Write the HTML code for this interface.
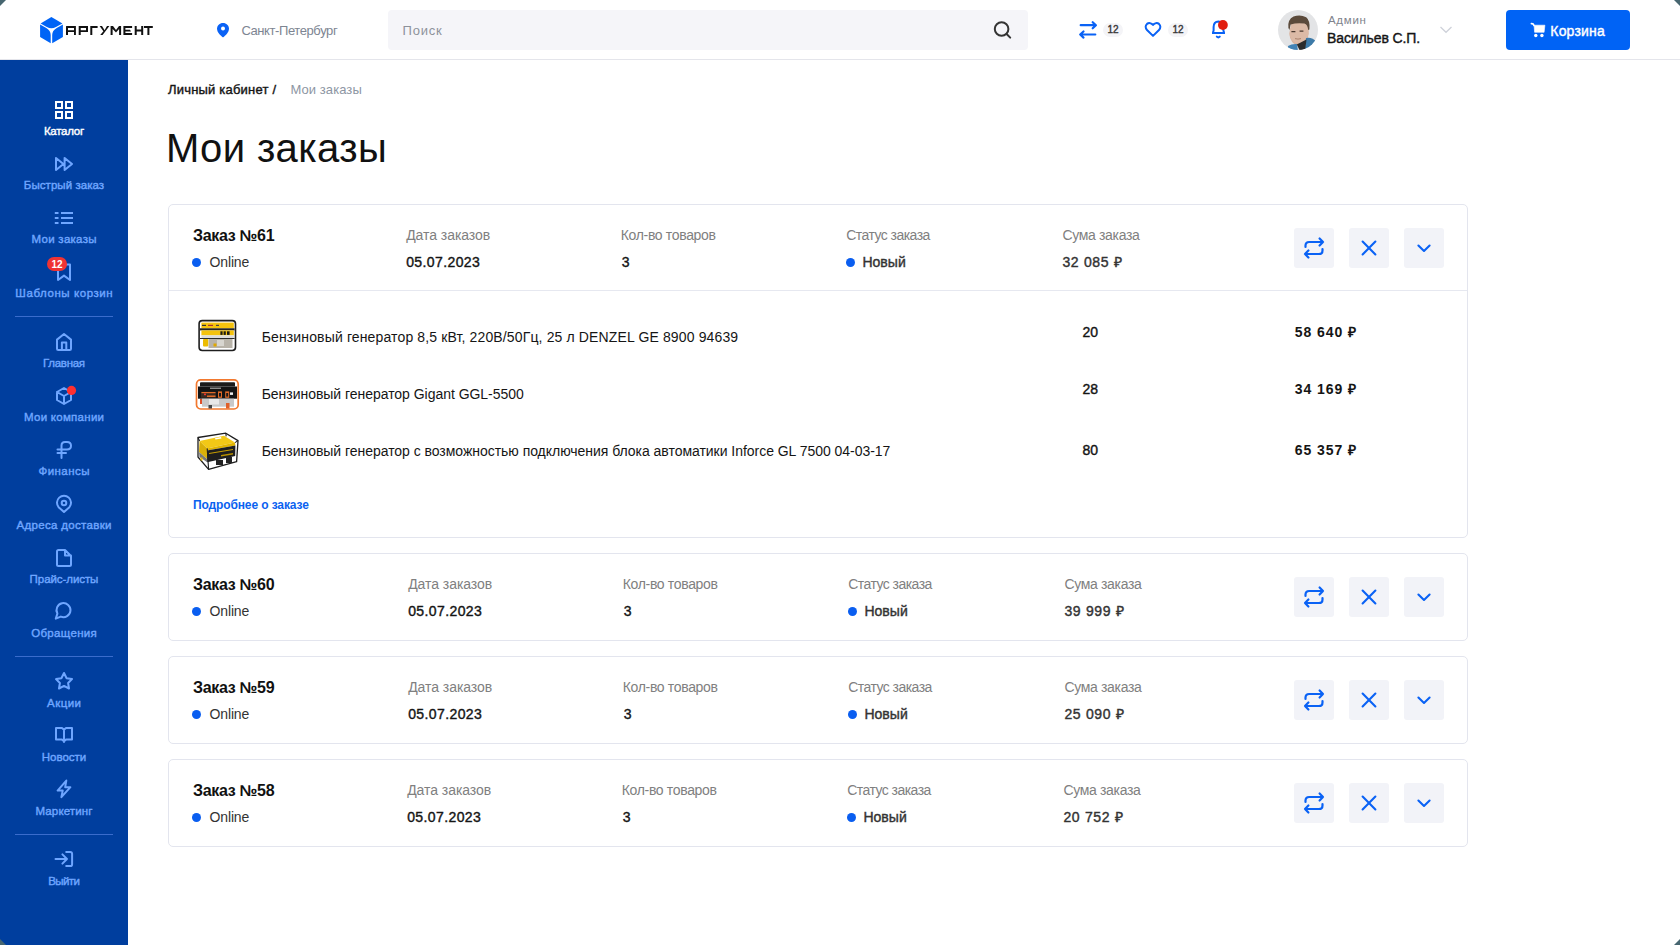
<!DOCTYPE html>
<html lang="ru">
<head>
<meta charset="utf-8">
<title>Мои заказы</title>
<style>
*{box-sizing:border-box;margin:0;padding:0}
html,body{width:1680px;height:945px;overflow:hidden;background:#fff;font-family:"Liberation Sans",sans-serif;color:#151515}
.abs{position:absolute}
.t{position:absolute;white-space:nowrap}
svg.abs{overflow:visible}
</style>
</head>
<body>
<div class="abs" style="left:0px;top:0px;width:1680px;height:59px;background:#fff;"></div>
<div class="abs" style="left:0px;top:59px;width:1680px;height:1px;background:#e4e5eb;"></div>
<svg class="abs" style="left:36px;top:14px;" width="30" height="32" viewBox="0 0 30 32"><g fill="#0064f6">
<path d="M4.6 9.4 L15.4 3 L26.4 9.4 L20 13 Q15.4 15.4 10.8 13 Z"/>
<path d="M4.1 10.4 L10.3 14 Q14.7 16.5 14.7 21 V29.2 L4.1 23 Z"/>
<path d="M26.9 10.4 L20.7 14 Q16.2 16.5 16.2 21 V29.2 L26.9 23 Z"/>
</g></svg>
<svg class="abs" style="left:64px;top:24px;" width="92" height="14" viewBox="0 0 92 14"><g fill="#111">
<path d="M2 2.5 Q2 2 2.5 2 H11.9 V11 H10 V8 H4 V11 H2 Z M4 4 V6.2 H10 V4 Z"/>
<path d="M14.7 2 H24 V8 H16.7 V11 H14.7 Z M16.7 4 V6.2 H22 V4 Z"/>
<path d="M26.3 2 H33.6 V4 H28.3 V11 H26.3 Z"/>
<path d="M35.6 2 H38 L40.6 6.2 L43 2 H45.4 L38.6 11 H36.2 L39.4 7.3 Z"/>
<path d="M46.6 2 H49 L52 6 L55 2 H57.1 V11 H55.1 V5 L52 8.6 L48.6 5 V11 H46.6 Z"/>
<path d="M59.4 2 H68.1 V4 H61.4 V5.8 H66 L67 7.4 H61.4 V9 H68.1 V11 H59.4 Z"/>
<path d="M70.7 2 H72.7 V5.6 H77.2 V2 H79.2 V11 H77.2 V7.4 H72.7 V11 H70.7 Z"/>
<path d="M80 2 H88.8 V4 H85.4 V11 H83.4 V4 H80 Z"/>
</g></svg>
<svg class="abs" style="left:215px;top:22px;" width="16" height="16" viewBox="0 0 16 16"><path d="M8 1 C4.6 1 2 3.6 2 6.8 C2 10.4 6.2 14.2 7.4 15 Q8 15.4 8.6 15 C9.8 14.2 14 10.4 14 6.8 C14 3.6 11.4 1 8 1 Z" fill="#0a62f5"/><circle cx="8" cy="6.6" r="2" fill="#fff"/></svg>
<div class="t" style="left:241.40px;top:23.60px;font-size:13px;line-height:13px;color:#7d8592;font-weight:400;letter-spacing:-0.408px">Санкт-Петербург</div>
<div class="abs" style="left:388px;top:10px;width:640px;height:40px;background:#f5f5f9;border-radius:4px"></div>
<div class="t" style="left:402.60px;top:23.60px;font-size:13px;line-height:13px;color:#8d929b;font-weight:400;letter-spacing:0.766px">Поиск</div>
<svg class="abs" style="left:990px;top:18px;" width="26" height="24" viewBox="0 0 26 24"><circle cx="11.6" cy="11" r="6.8" stroke="#343434" stroke-width="2" fill="none"/><path d="M16.6 16 L20.2 19.6" stroke="#343434" stroke-width="2" stroke-linecap="round"/></svg>
<svg class="abs" style="left:1076px;top:19px;" width="24" height="22" viewBox="0 0 24 22"><path d="M4.7 6.2 H19.8 M16.7 3.2 L19.9 6.2 L16.7 9.3 M19.3 15.5 H4.3 M7.5 12.5 L4.2 15.5 L7.5 18.6" stroke="#0a62f5" stroke-width="2.2" fill="none" stroke-linecap="round" stroke-linejoin="round"/></svg>
<div class="abs" style="left:1103px;top:23px;width:20px;height:14px;background:#f4f4f7;border-radius:7px"></div>
<div class="t" style="left:1103.00px;top:24.54px;font-size:10px;line-height:10px;color:#3a3a3a;font-weight:400;-webkit-text-stroke:0.4px #3a3a3a;width:20px;text-align:center">12</div>
<svg class="abs" style="left:1142px;top:20px;" width="22" height="20" viewBox="0 0 22 20"><path d="M11 15.9 L5 10 C3.2 8.2 3.2 5.4 5 3.9 C6.8 2.5 9.4 2.9 11 4.9 C12.6 2.9 15.2 2.5 17 3.9 C18.8 5.4 18.8 8.2 17 10 Z" stroke="#0a62f5" stroke-width="2" fill="none" stroke-linejoin="round"/></svg>
<div class="abs" style="left:1168px;top:23px;width:20px;height:14px;background:#f4f4f7;border-radius:7px"></div>
<div class="t" style="left:1168.00px;top:24.54px;font-size:10px;line-height:10px;color:#3a3a3a;font-weight:400;-webkit-text-stroke:0.4px #3a3a3a;width:20px;text-align:center">12</div>
<svg class="abs" style="left:1208px;top:18px;" width="24" height="24" viewBox="0 0 24 24"><path d="M4 15.1 H17 M4.8 15.1 L5.6 12.5 V9 Q5.6 3.6 10.5 3.4 Q15.4 3.6 15.4 9 V12.5 L16.2 15.1" stroke="#0a62f5" stroke-width="2" fill="none" stroke-linejoin="round"/><path d="M8.8 18.6 Q10.3 20.1 11.8 18.6" stroke="#0a62f5" stroke-width="2" fill="none" stroke-linecap="round"/><circle cx="14.9" cy="7" r="4.9" fill="#e11d0e"/></svg>
<svg class="abs" style="left:1278px;top:10px;" width="40" height="40" viewBox="0 0 40 40"><defs><clipPath id="av"><circle cx="20" cy="20" r="20"/></clipPath></defs><g clip-path="url(#av)">
<rect width="40" height="40" fill="#e3e4e6"/>
<ellipse cx="21" cy="23.5" rx="9.6" ry="12" fill="#d8b39e"/>
<path d="M11.5 25 Q13 30 17 33 L24 33 Q29 30 30.5 24 L31 17 Q30 13 26 12.5 Q19 12 13 14 Z" fill="#dcbaa6"/>
<path d="M10.4 18 Q9.4 9.5 15.5 6.6 Q22 4 28.2 7.2 Q32.4 10.6 31.4 19.5 L30.2 20 Q29.6 14.5 26.4 13.6 Q19 12.4 12.6 14.6 L11.5 20 Z" fill="#5b4a3b"/>
<path d="M13.4 21.6 H17.4 M21.6 21.2 H25.4" stroke="#4a3a30" stroke-width="1.3"/>
<path d="M17 28.6 Q20 29.6 23 28.6" stroke="#a47c66" stroke-width="0.9" fill="none"/>
<path d="M28 28 Q33.5 26.5 39 32 L40 41 L26.5 41 Z" fill="#3d7aa8"/>
<path d="M10 36 Q14 33.5 19 34 L20 41 L10 41 Z" fill="#4283b5"/>
<path d="M18.8 34.5 L22 41 L27 41 L28.5 29.5 Z" fill="#2b2b2b"/>
</g></svg>
<div class="t" style="left:1328.00px;top:14.52px;font-size:11.5px;line-height:11.5px;color:#80838c;font-weight:400;letter-spacing:0.697px">Админ</div>
<div class="t" style="left:1327.00px;top:31.15px;font-size:14px;line-height:14px;color:#151515;font-weight:400;-webkit-text-stroke:0.4px #151515;letter-spacing:-0.107px">Васильев С.П.</div>
<svg class="abs" style="left:1438px;top:24px;" width="16" height="10" viewBox="0 0 16 10"><path d="M2.5 3 L8 8.3 L13.5 3" stroke="#cfd2da" stroke-width="1.3" fill="none"/></svg>
<div class="abs" style="left:1506px;top:10px;width:124px;height:40px;background:#0063f5;border-radius:4px"></div>
<svg class="abs" style="left:1529px;top:21px;" width="18" height="18" viewBox="0 0 18 18"><path d="M2.4 2.7 Q4.4 2.6 5 4.4" stroke="#fff" stroke-width="1.7" fill="none" stroke-linecap="round"/><path d="M5.1 4.2 H15.9 L15.1 11.3 H5.6 Z" fill="#fff" stroke="#fff" stroke-width="0.6" stroke-linejoin="round"/><circle cx="6.8" cy="14.5" r="1.7" fill="#fff"/><circle cx="12.9" cy="14.5" r="1.7" fill="#fff"/></svg>
<div class="t" style="left:1550.30px;top:23.65px;font-size:14px;line-height:14px;color:#fff;font-weight:400;-webkit-text-stroke:0.4px #fff;letter-spacing:0.193px">Корзина</div>
<div class="abs" style="left:0px;top:60px;width:128px;height:885px;background:#003e9e;"></div>
<svg class="abs" style="left:49px;top:96px;" width="30" height="30" viewBox="0 0 30 30"><g fill="none" stroke="#fff" stroke-width="2"><rect x="7" y="6" width="6" height="6"/><rect x="17" y="6" width="6" height="6"/><rect x="7" y="16" width="6" height="6"/><rect x="17" y="16" width="6" height="6"/></g></svg>
<div class="t" style="left:0.00px;top:126.27px;font-size:11.5px;line-height:11.5px;color:#fff;font-weight:400;-webkit-text-stroke:0.4px #fff;letter-spacing:-0.268px;text-indent:-0.268px;width:128px;text-align:center">Каталог</div>
<svg class="abs" style="left:49px;top:149px;" width="30" height="30" viewBox="0 0 30 30"><g fill="none" stroke="#6fa6ff" stroke-width="2" stroke-linejoin="round" stroke-linecap="round"><path d="M7 9 V21 L14.4 15 Z M15.6 9 V21 L23 15 Z"/></g></svg>
<div class="t" style="left:0.00px;top:180.27px;font-size:11.5px;line-height:11.5px;color:#6fa6ff;font-weight:400;-webkit-text-stroke:0.4px #6fa6ff;letter-spacing:0.056px;text-indent:0.056px;width:128px;text-align:center">Быстрый заказ</div>
<svg class="abs" style="left:49px;top:203px;" width="30" height="30" viewBox="0 0 30 30"><g fill="none" stroke="#6fa6ff" stroke-width="2" stroke-linejoin="round" stroke-linecap="round"><path stroke-linecap="butt" d="M5.8 10 H9.5 M12 10 H24 M5.8 15 H9.5 M12 15 H24 M5.8 20 H9.5 M12 20 H24"/></g></svg>
<div class="t" style="left:0.00px;top:234.27px;font-size:11.5px;line-height:11.5px;color:#6fa6ff;font-weight:400;-webkit-text-stroke:0.4px #6fa6ff;letter-spacing:0.276px;text-indent:0.276px;width:128px;text-align:center">Мои заказы</div>
<svg class="abs" style="left:49px;top:257px;" width="30" height="30" viewBox="0 0 30 30"><g fill="none" stroke="#6fa6ff" stroke-width="2" stroke-linejoin="round" stroke-linecap="round"><path d="M9 7.5 H21 V23 L15 18.6 L9 23 Z"/></g></svg>
<div class="t" style="left:0.00px;top:288.27px;font-size:11.5px;line-height:11.5px;color:#6fa6ff;font-weight:400;-webkit-text-stroke:0.4px #6fa6ff;letter-spacing:0.571px;text-indent:0.571px;width:128px;text-align:center">Шаблоны корзин</div>
<div class="abs" style="left:47px;top:257px;width:20px;height:14px;background:#ef3333;border-radius:7px"></div>
<div class="t" style="left:47.00px;top:259.54px;font-size:10px;line-height:10px;color:#fff;font-weight:700;width:20px;text-align:center">12</div>
<svg class="abs" style="left:49px;top:327.5px;" width="30" height="30" viewBox="0 0 30 30"><g fill="none" stroke="#6fa6ff" stroke-width="2" stroke-linejoin="round" stroke-linecap="round"><path d="M8 11.6 L15 6 L22 11.6 V20.8 Q22 22 20.8 22 H9.2 Q8 22 8 20.8 Z M12.9 22 V14.6 H17.3 V22"/></g></svg>
<div class="t" style="left:0.00px;top:358.27px;font-size:11.5px;line-height:11.5px;color:#6fa6ff;font-weight:400;-webkit-text-stroke:0.4px #6fa6ff;letter-spacing:-0.274px;text-indent:-0.274px;width:128px;text-align:center">Главная</div>
<svg class="abs" style="left:49px;top:381.5px;" width="30" height="30" viewBox="0 0 30 30"><g fill="none" stroke="#6fa6ff" stroke-width="2" stroke-linejoin="round" stroke-linecap="round"><path d="M15 6 L22 10 V18 L15 22 L8 18 V10 Z M8 10 L15 14 L22 10 M15 14 V22"/></g></svg>
<div class="t" style="left:0.00px;top:412.27px;font-size:11.5px;line-height:11.5px;color:#6fa6ff;font-weight:400;-webkit-text-stroke:0.4px #6fa6ff;letter-spacing:0.274px;text-indent:0.274px;width:128px;text-align:center">Мои компании</div>
<svg class="abs" style="left:64px;top:383px;" width="14" height="14" viewBox="0 0 14 14"><circle cx="7.5" cy="7.4" r="4.6" fill="#ff2f2f"/></svg>
<svg class="abs" style="left:49px;top:435px;" width="30" height="30" viewBox="0 0 30 30"><g fill="none" stroke="#6fa6ff" stroke-width="2" stroke-linejoin="round" stroke-linecap="round"><path d="M12.5 23 V10.5 Q12.5 7 16 7 H18 Q22 7 22 10.75 Q22 14.5 18 14.5 H8.5 M8.5 18 H17"/></g></svg>
<div class="t" style="left:0.00px;top:466.27px;font-size:11.5px;line-height:11.5px;color:#6fa6ff;font-weight:400;-webkit-text-stroke:0.4px #6fa6ff;letter-spacing:0.448px;text-indent:0.448px;width:128px;text-align:center">Финансы</div>
<svg class="abs" style="left:49px;top:489.5px;" width="30" height="30" viewBox="0 0 30 30"><g fill="none" stroke="#6fa6ff" stroke-width="2" stroke-linejoin="round" stroke-linecap="round"><path d="M15 22 L9.6 17.2 A7 7 0 1 1 20.4 17.2 Z"/><circle cx="15" cy="13" r="2.3"/></g></svg>
<div class="t" style="left:0.00px;top:520.27px;font-size:11.5px;line-height:11.5px;color:#6fa6ff;font-weight:400;-webkit-text-stroke:0.4px #6fa6ff;letter-spacing:0.311px;text-indent:0.311px;width:128px;text-align:center">Адреса доставки</div>
<svg class="abs" style="left:49px;top:543.5px;" width="30" height="30" viewBox="0 0 30 30"><g fill="none" stroke="#6fa6ff" stroke-width="2" stroke-linejoin="round" stroke-linecap="round"><path d="M8 7.5 Q8 6 9.5 6 H16 L22 12 V20.5 Q22 22 20.5 22 H9.5 Q8 22 8 20.5 Z M16 6 V11.5 H22"/></g></svg>
<div class="t" style="left:0.00px;top:574.27px;font-size:11.5px;line-height:11.5px;color:#6fa6ff;font-weight:400;-webkit-text-stroke:0.4px #6fa6ff;letter-spacing:-0.071px;text-indent:-0.071px;width:128px;text-align:center">Прайс-листы</div>
<svg class="abs" style="left:49px;top:597px;" width="30" height="30" viewBox="0 0 30 30"><g fill="none" stroke="#6fa6ff" stroke-width="2" stroke-linejoin="round" stroke-linecap="round"><path d="M8.4 16.6 A7 7 0 1 1 11.8 19.6 L6.8 21.6 Z"/></g></svg>
<div class="t" style="left:0.00px;top:628.27px;font-size:11.5px;line-height:11.5px;color:#6fa6ff;font-weight:400;-webkit-text-stroke:0.4px #6fa6ff;letter-spacing:0.334px;text-indent:0.334px;width:128px;text-align:center">Обращения</div>
<svg class="abs" style="left:49px;top:667px;" width="30" height="30" viewBox="0 0 30 30"><g fill="none" stroke="#6fa6ff" stroke-width="2" stroke-linejoin="round" stroke-linecap="round"><path d="M15 6 L17.6 11.3 L23 12.1 L19.1 16 L20 21.5 L15 18.9 L10 21.5 L10.9 16 L7 12.1 L12.4 11.3 Z"/></g></svg>
<div class="t" style="left:0.00px;top:698.27px;font-size:11.5px;line-height:11.5px;color:#6fa6ff;font-weight:400;-webkit-text-stroke:0.4px #6fa6ff;letter-spacing:0.472px;text-indent:0.472px;width:128px;text-align:center">Акции</div>
<svg class="abs" style="left:49px;top:721px;" width="30" height="30" viewBox="0 0 30 30"><g fill="none" stroke="#6fa6ff" stroke-width="2" stroke-linejoin="round" stroke-linecap="round"><path d="M7 7 H13 L15 8.6 L17 7 H23 V18.6 H17 L15 20.2 L13 18.6 H7 Z M15 8.6 V21"/></g></svg>
<div class="t" style="left:0.00px;top:752.27px;font-size:11.5px;line-height:11.5px;color:#6fa6ff;font-weight:400;-webkit-text-stroke:0.4px #6fa6ff;letter-spacing:0.018px;text-indent:0.018px;width:128px;text-align:center">Новости</div>
<svg class="abs" style="left:49px;top:775px;" width="30" height="30" viewBox="0 0 30 30"><g fill="none" stroke="#6fa6ff" stroke-width="2" stroke-linejoin="round" stroke-linecap="round"><path d="M17.3 5.6 L8.6 15.6 H13.7 L12.4 22.2 L21.4 12.2 H16.2 Z"/></g></svg>
<div class="t" style="left:0.00px;top:806.27px;font-size:11.5px;line-height:11.5px;color:#6fa6ff;font-weight:400;-webkit-text-stroke:0.4px #6fa6ff;letter-spacing:0.148px;text-indent:0.148px;width:128px;text-align:center">Маркетинг</div>
<svg class="abs" style="left:49px;top:845px;" width="30" height="30" viewBox="0 0 30 30"><g fill="none" stroke="#6fa6ff" stroke-width="2" stroke-linejoin="round" stroke-linecap="round"><path d="M6.5 14 H18 M13.4 9.4 L18 14 L13.4 18.6 M17.2 6.9 H21.2 Q23.1 6.9 23.1 8.8 V19.2 Q23.1 21.1 21.2 21.1 H17.2"/></g></svg>
<div class="t" style="left:0.00px;top:876.27px;font-size:11.5px;line-height:11.5px;color:#6fa6ff;font-weight:400;-webkit-text-stroke:0.4px #6fa6ff;letter-spacing:-0.582px;text-indent:-0.582px;width:128px;text-align:center">Выйти</div>
<div class="abs" style="left:15px;top:316px;width:98px;height:1px;background:#3a6ccc;"></div>
<div class="abs" style="left:15px;top:656px;width:98px;height:1px;background:#3a6ccc;"></div>
<div class="abs" style="left:15px;top:834px;width:98px;height:1px;background:#3a6ccc;"></div>
<div class="t" style="left:168.00px;top:83.30px;font-size:13px;line-height:13px;color:#151515;font-weight:400;-webkit-text-stroke:0.4px #151515;letter-spacing:0.199px">Личный кабинет /</div>
<div class="t" style="left:290.40px;top:83.30px;font-size:13px;line-height:13px;color:#8d96a3;font-weight:400;letter-spacing:0.079px">Мои заказы</div>
<div class="t" style="left:165.90px;top:128.14px;font-size:40px;line-height:40px;color:#111;font-weight:400;letter-spacing:0.381px">Мои заказы</div>
<div class="abs" style="left:168px;top:204px;width:1300px;height:334px;background:#fff;border:1px solid #e3e5ee;border-radius:5px;box-sizing:border-box"></div>
<div class="abs" style="left:169px;top:290px;width:1298px;height:1px;background:#e6e8f0;"></div>
<div class="t" style="left:193.00px;top:227.66px;font-size:16px;line-height:16px;color:#111;font-weight:700;letter-spacing:-0.307px">Заказ №61</div>
<div class="abs" style="left:192px;top:257.5px;width:9px;height:9px;background:#0a5ef0;border-radius:50%"></div>
<div class="t" style="left:209.50px;top:254.95px;font-size:14px;line-height:14px;color:#333;font-weight:400;letter-spacing:-0.137px">Online</div>
<div class="t" style="left:406.20px;top:227.75px;font-size:14px;line-height:14px;color:#808080;font-weight:400;letter-spacing:-0.055px">Дата заказов</div>
<div class="t" style="left:406.20px;top:255.15px;font-size:14px;line-height:14px;color:#151515;font-weight:400;-webkit-text-stroke:0.4px #151515;letter-spacing:0.391px">05.07.2023</div>
<div class="t" style="left:620.80px;top:227.75px;font-size:14px;line-height:14px;color:#808080;font-weight:400;letter-spacing:-0.339px">Кол-во товаров</div>
<div class="t" style="left:621.80px;top:255.15px;font-size:14px;line-height:14px;color:#151515;font-weight:400;-webkit-text-stroke:0.4px #151515">3</div>
<div class="t" style="left:846.20px;top:227.75px;font-size:14px;line-height:14px;color:#808080;font-weight:400;letter-spacing:-0.536px">Статус заказа</div>
<div class="abs" style="left:846px;top:257.5px;width:9px;height:9px;background:#0a5ef0;border-radius:50%"></div>
<div class="t" style="left:862.40px;top:255.15px;font-size:14px;line-height:14px;color:#333;font-weight:400;-webkit-text-stroke:0.4px #333;letter-spacing:0.026px">Новый</div>
<div class="t" style="left:1062.40px;top:227.75px;font-size:14px;line-height:14px;color:#808080;font-weight:400;letter-spacing:-0.324px">Сума заказа</div>
<div class="t" style="left:1062.40px;top:255.15px;font-size:14px;line-height:14px;color:#333;font-weight:400;-webkit-text-stroke:0.4px #333;letter-spacing:0.684px">32 085 ₽</div>
<div class="abs" style="left:1294px;top:228px;width:40px;height:40px;background:#f2f3f8;border-radius:3px"></div>
<div class="abs" style="left:1349px;top:228px;width:40px;height:40px;background:#f2f3f8;border-radius:3px"></div>
<div class="abs" style="left:1404px;top:228px;width:40px;height:40px;background:#f2f3f8;border-radius:3px"></div>
<svg class="abs" style="left:1294px;top:228px;" width="40" height="40" viewBox="0 0 40 40"><path d="M11.5 19 V17.6 Q11.5 14 15.1 14 H29 M25.6 10.5 L29 14 L25.6 17.5 M28.5 21 V22.4 Q28.5 26 24.9 26 H11 M14.4 22.5 L11 26 L14.4 29.5" stroke="#0a62f5" stroke-width="2.2" fill="none" stroke-linecap="round" stroke-linejoin="round"/></svg>
<svg class="abs" style="left:1349px;top:228px;" width="40" height="40" viewBox="0 0 40 40"><path d="M13.6 13.6 L26.4 26.4 M26.4 13.6 L13.6 26.4" stroke="#0a62f5" stroke-width="2.1" stroke-linecap="round"/></svg>
<svg class="abs" style="left:1404px;top:228px;" width="40" height="40" viewBox="0 0 40 40"><path d="M14.4 17.6 L20 23 L25.6 17.6" stroke="#0a62f5" stroke-width="2.1" fill="none" stroke-linecap="round" stroke-linejoin="round"/></svg>
<div class="t" style="left:261.70px;top:329.55px;font-size:14px;line-height:14px;color:#151515;font-weight:400;letter-spacing:0.138px">Бензиновый генератор 8,5 кВт, 220В/50Гц, 25 л DENZEL GE 8900 94639</div>
<div class="t" style="left:1082.50px;top:325.15px;font-size:14px;line-height:14px;color:#151515;font-weight:400;-webkit-text-stroke:0.4px #151515">20</div>
<div class="t" style="left:1294.70px;top:325.15px;font-size:14px;line-height:14px;color:#151515;font-weight:700;letter-spacing:0.97px">58 640 ₽</div>
<div class="t" style="left:261.70px;top:386.75px;font-size:14px;line-height:14px;color:#151515;font-weight:400;letter-spacing:-0.034px">Бензиновый генератор Gigant GGL-5500</div>
<div class="t" style="left:1082.50px;top:381.95px;font-size:14px;line-height:14px;color:#151515;font-weight:400;-webkit-text-stroke:0.4px #151515">28</div>
<div class="t" style="left:1294.70px;top:381.95px;font-size:14px;line-height:14px;color:#151515;font-weight:700;letter-spacing:0.97px">34 169 ₽</div>
<div class="t" style="left:261.70px;top:443.85px;font-size:14px;line-height:14px;color:#151515;font-weight:400;letter-spacing:-0.035px">Бензиновый генератор с возможностью подключения блока автоматики Inforce GL 7500 04-03-17</div>
<div class="t" style="left:1082.50px;top:442.95px;font-size:14px;line-height:14px;color:#151515;font-weight:400;-webkit-text-stroke:0.4px #151515">80</div>
<div class="t" style="left:1294.70px;top:442.95px;font-size:14px;line-height:14px;color:#151515;font-weight:700;letter-spacing:0.97px">65 357 ₽</div>
<svg class="abs" style="left:193px;top:314px;" width="50" height="42" viewBox="0 0 50 42"><rect x="6.1" y="6.6" width="36.4" height="29.9" rx="3.2" fill="#fff" stroke="#1e1e1e" stroke-width="1.6"/>
<rect x="8.4" y="8.6" width="32.4" height="5.8" fill="#f4c20d"/>
<rect x="9" y="10.8" width="4" height="1.2" fill="#333"/><rect x="15" y="10.8" width="5" height="1.2" fill="#a33"/><rect x="23" y="10.8" width="3" height="1.2" fill="#444"/>
<rect x="7" y="14.3" width="34.6" height="2.1" fill="#222"/>
<rect x="8.4" y="16.4" width="32.4" height="5" fill="#f4c20d"/>
<rect x="27.4" y="17.3" width="2.2" height="3.6" fill="#1a1a1a"/><rect x="30.6" y="17.3" width="2.2" height="3.6" fill="#1a1a1a"/><rect x="34" y="17.3" width="2.6" height="3.6" fill="#1a1a1a"/>
<rect x="8.4" y="21.4" width="32.4" height="2.6" fill="#dcdcdc"/>
<rect x="7" y="24" width="34.6" height="1" fill="#2a2a2a"/>
<rect x="15.5" y="25" width="24" height="9" fill="#b9b4aa"/>
<rect x="24" y="26" width="7" height="6" fill="#d8d6d0"/>
<rect x="10" y="25" width="5.2" height="7.6" rx="1" fill="#ecbc00"/>
<rect x="20.5" y="29.5" width="3" height="3" fill="#e0a800"/></svg>
<svg class="abs" style="left:191px;top:372px;" width="52" height="42" viewBox="0 0 52 42"><rect x="5.5" y="7.9" width="41.7" height="29.1" rx="4.2" fill="#fff" stroke="#f2792f" stroke-width="1.7"/>
<path d="M9 11 Q9 10.2 10 10.2 H43 Q44 10.2 44 11 V14.5 H9 Z" fill="#1b1b1b"/>
<rect x="7" y="14.5" width="39" height="12.2" fill="#141414"/>
<rect x="19" y="15.6" width="11" height="1.3" fill="#999"/>
<rect x="10" y="19.8" width="14.8" height="6" fill="#3a2a20"/>
<rect x="10.5" y="20" width="14" height="1.2" fill="#e06a28"/><rect x="16" y="23.5" width="8.5" height="1.5" fill="#e06a28"/>
<rect x="13" y="21.6" width="2" height="1.6" fill="#e33"/>
<rect x="27" y="19.4" width="4" height="6.4" fill="#e06a28"/><rect x="34.2" y="19.4" width="4" height="6.4" fill="#e06a28"/>
<rect x="28" y="21" width="2" height="3.6" fill="#1a1a1a"/><rect x="35.2" y="21" width="2" height="3.6" fill="#1a1a1a"/>
<rect x="39" y="20.4" width="3" height="2.5" fill="#eee"/>
<rect x="11" y="26.7" width="32" height="8" fill="#c9c9c9"/>
<rect x="18" y="27" width="10" height="5.5" fill="#e8e8e8"/>
<rect x="9" y="27" width="2" height="5" fill="#e0502a"/>
<rect x="17.5" y="33" width="3.5" height="3.5" fill="#444"/><rect x="35" y="31" width="3.5" height="5.5" fill="#e0602a"/></svg>
<svg class="abs" style="left:191px;top:426px;" width="54" height="50" viewBox="0 0 54 50"><path d="M7 11.5 L34.8 7.2 L47 14.6 L45.6 35.6 L17.6 43.4 L7 31 Z" fill="#fff" stroke="#1e1e1e" stroke-width="1.3" stroke-linejoin="round"/>
<path d="M8.6 15 L33 9.8 L44 16.6 L16.2 22.4 Z" fill="#f2c816"/>
<path d="M16.2 22.4 L44 16.6 L44.4 19.5 L16 24.5 Z" fill="#e0b400"/>
<path d="M8.6 15 L16.2 22.4 L16 33 L8 26 Z" fill="#d9b008"/>
<path d="M16 24.5 L44.4 19.5 L44.2 30 L16.2 36.2 Z" fill="#1e1e1e"/>
<path d="M18 27 L42 23 L42 24 L18 28 Z" fill="#c9a000"/>
<path d="M30 29 L42 27 L42 28.5 L30 30.6 Z" fill="#b89000"/>
<path d="M8 26 L16 33 L16.2 36.2 L8.5 31 Z" fill="#777"/>
<rect x="25" y="34" width="7" height="5" fill="#222"/><rect x="35" y="31" width="6" height="6" fill="#222"/>
<rect x="9.5" y="31.5" width="2" height="3" fill="#f0c000"/>
<path d="M24 12.2 L30 11 L30.5 12.4 L24.4 13.6 Z" fill="#fff"/>
<path d="M34.8 7.2 L35.2 10.4 M7 11.5 L8.6 15 M17.6 43.4 L16.2 22.4 M47 14.6 L44 16.6" stroke="#1e1e1e" stroke-width="1.1" fill="none"/></svg>
<div class="t" style="left:192.90px;top:498.84px;font-size:12px;line-height:12px;color:#0a62f0;font-weight:700;letter-spacing:-0.111px">Подробнее о заказе</div>
<div class="abs" style="left:168px;top:553px;width:1300px;height:88px;background:#fff;border:1px solid #e3e5ee;border-radius:5px;box-sizing:border-box"></div>
<div class="t" style="left:193.00px;top:576.66px;font-size:16px;line-height:16px;color:#111;font-weight:700;letter-spacing:-0.307px">Заказ №60</div>
<div class="abs" style="left:192px;top:606.5px;width:9px;height:9px;background:#0a5ef0;border-radius:50%"></div>
<div class="t" style="left:209.50px;top:603.95px;font-size:14px;line-height:14px;color:#333;font-weight:400;letter-spacing:-0.137px">Online</div>
<div class="t" style="left:408.20px;top:576.75px;font-size:14px;line-height:14px;color:#808080;font-weight:400;letter-spacing:-0.055px">Дата заказов</div>
<div class="t" style="left:408.20px;top:604.15px;font-size:14px;line-height:14px;color:#151515;font-weight:400;-webkit-text-stroke:0.4px #151515;letter-spacing:0.391px">05.07.2023</div>
<div class="t" style="left:622.80px;top:576.75px;font-size:14px;line-height:14px;color:#808080;font-weight:400;letter-spacing:-0.339px">Кол-во товаров</div>
<div class="t" style="left:623.80px;top:604.15px;font-size:14px;line-height:14px;color:#151515;font-weight:400;-webkit-text-stroke:0.4px #151515">3</div>
<div class="t" style="left:848.20px;top:576.75px;font-size:14px;line-height:14px;color:#808080;font-weight:400;letter-spacing:-0.536px">Статус заказа</div>
<div class="abs" style="left:848px;top:606.5px;width:9px;height:9px;background:#0a5ef0;border-radius:50%"></div>
<div class="t" style="left:864.40px;top:604.15px;font-size:14px;line-height:14px;color:#333;font-weight:400;-webkit-text-stroke:0.4px #333;letter-spacing:0.026px">Новый</div>
<div class="t" style="left:1064.40px;top:576.75px;font-size:14px;line-height:14px;color:#808080;font-weight:400;letter-spacing:-0.324px">Сума заказа</div>
<div class="t" style="left:1064.40px;top:604.15px;font-size:14px;line-height:14px;color:#333;font-weight:400;-webkit-text-stroke:0.4px #333;letter-spacing:0.684px">39 999 ₽</div>
<div class="abs" style="left:1294px;top:577px;width:40px;height:40px;background:#f2f3f8;border-radius:3px"></div>
<div class="abs" style="left:1349px;top:577px;width:40px;height:40px;background:#f2f3f8;border-radius:3px"></div>
<div class="abs" style="left:1404px;top:577px;width:40px;height:40px;background:#f2f3f8;border-radius:3px"></div>
<svg class="abs" style="left:1294px;top:577px;" width="40" height="40" viewBox="0 0 40 40"><path d="M11.5 19 V17.6 Q11.5 14 15.1 14 H29 M25.6 10.5 L29 14 L25.6 17.5 M28.5 21 V22.4 Q28.5 26 24.9 26 H11 M14.4 22.5 L11 26 L14.4 29.5" stroke="#0a62f5" stroke-width="2.2" fill="none" stroke-linecap="round" stroke-linejoin="round"/></svg>
<svg class="abs" style="left:1349px;top:577px;" width="40" height="40" viewBox="0 0 40 40"><path d="M13.6 13.6 L26.4 26.4 M26.4 13.6 L13.6 26.4" stroke="#0a62f5" stroke-width="2.1" stroke-linecap="round"/></svg>
<svg class="abs" style="left:1404px;top:577px;" width="40" height="40" viewBox="0 0 40 40"><path d="M14.4 17.6 L20 23 L25.6 17.6" stroke="#0a62f5" stroke-width="2.1" fill="none" stroke-linecap="round" stroke-linejoin="round"/></svg>
<div class="abs" style="left:168px;top:656px;width:1300px;height:88px;background:#fff;border:1px solid #e3e5ee;border-radius:5px;box-sizing:border-box"></div>
<div class="t" style="left:193.00px;top:679.66px;font-size:16px;line-height:16px;color:#111;font-weight:700;letter-spacing:-0.307px">Заказ №59</div>
<div class="abs" style="left:192px;top:709.5px;width:9px;height:9px;background:#0a5ef0;border-radius:50%"></div>
<div class="t" style="left:209.50px;top:706.95px;font-size:14px;line-height:14px;color:#333;font-weight:400;letter-spacing:-0.137px">Online</div>
<div class="t" style="left:408.20px;top:679.75px;font-size:14px;line-height:14px;color:#808080;font-weight:400;letter-spacing:-0.055px">Дата заказов</div>
<div class="t" style="left:408.20px;top:707.15px;font-size:14px;line-height:14px;color:#151515;font-weight:400;-webkit-text-stroke:0.4px #151515;letter-spacing:0.391px">05.07.2023</div>
<div class="t" style="left:622.80px;top:679.75px;font-size:14px;line-height:14px;color:#808080;font-weight:400;letter-spacing:-0.339px">Кол-во товаров</div>
<div class="t" style="left:623.80px;top:707.15px;font-size:14px;line-height:14px;color:#151515;font-weight:400;-webkit-text-stroke:0.4px #151515">3</div>
<div class="t" style="left:848.20px;top:679.75px;font-size:14px;line-height:14px;color:#808080;font-weight:400;letter-spacing:-0.536px">Статус заказа</div>
<div class="abs" style="left:848px;top:709.5px;width:9px;height:9px;background:#0a5ef0;border-radius:50%"></div>
<div class="t" style="left:864.40px;top:707.15px;font-size:14px;line-height:14px;color:#333;font-weight:400;-webkit-text-stroke:0.4px #333;letter-spacing:0.026px">Новый</div>
<div class="t" style="left:1064.40px;top:679.75px;font-size:14px;line-height:14px;color:#808080;font-weight:400;letter-spacing:-0.324px">Сума заказа</div>
<div class="t" style="left:1064.40px;top:707.15px;font-size:14px;line-height:14px;color:#333;font-weight:400;-webkit-text-stroke:0.4px #333;letter-spacing:0.684px">25 090 ₽</div>
<div class="abs" style="left:1294px;top:680px;width:40px;height:40px;background:#f2f3f8;border-radius:3px"></div>
<div class="abs" style="left:1349px;top:680px;width:40px;height:40px;background:#f2f3f8;border-radius:3px"></div>
<div class="abs" style="left:1404px;top:680px;width:40px;height:40px;background:#f2f3f8;border-radius:3px"></div>
<svg class="abs" style="left:1294px;top:680px;" width="40" height="40" viewBox="0 0 40 40"><path d="M11.5 19 V17.6 Q11.5 14 15.1 14 H29 M25.6 10.5 L29 14 L25.6 17.5 M28.5 21 V22.4 Q28.5 26 24.9 26 H11 M14.4 22.5 L11 26 L14.4 29.5" stroke="#0a62f5" stroke-width="2.2" fill="none" stroke-linecap="round" stroke-linejoin="round"/></svg>
<svg class="abs" style="left:1349px;top:680px;" width="40" height="40" viewBox="0 0 40 40"><path d="M13.6 13.6 L26.4 26.4 M26.4 13.6 L13.6 26.4" stroke="#0a62f5" stroke-width="2.1" stroke-linecap="round"/></svg>
<svg class="abs" style="left:1404px;top:680px;" width="40" height="40" viewBox="0 0 40 40"><path d="M14.4 17.6 L20 23 L25.6 17.6" stroke="#0a62f5" stroke-width="2.1" fill="none" stroke-linecap="round" stroke-linejoin="round"/></svg>
<div class="abs" style="left:168px;top:759px;width:1300px;height:88px;background:#fff;border:1px solid #e3e5ee;border-radius:5px;box-sizing:border-box"></div>
<div class="t" style="left:193.00px;top:782.66px;font-size:16px;line-height:16px;color:#111;font-weight:700;letter-spacing:-0.307px">Заказ №58</div>
<div class="abs" style="left:192px;top:812.5px;width:9px;height:9px;background:#0a5ef0;border-radius:50%"></div>
<div class="t" style="left:209.50px;top:809.95px;font-size:14px;line-height:14px;color:#333;font-weight:400;letter-spacing:-0.137px">Online</div>
<div class="t" style="left:407.20px;top:782.75px;font-size:14px;line-height:14px;color:#808080;font-weight:400;letter-spacing:-0.055px">Дата заказов</div>
<div class="t" style="left:407.20px;top:810.15px;font-size:14px;line-height:14px;color:#151515;font-weight:400;-webkit-text-stroke:0.4px #151515;letter-spacing:0.391px">05.07.2023</div>
<div class="t" style="left:621.80px;top:782.75px;font-size:14px;line-height:14px;color:#808080;font-weight:400;letter-spacing:-0.339px">Кол-во товаров</div>
<div class="t" style="left:622.80px;top:810.15px;font-size:14px;line-height:14px;color:#151515;font-weight:400;-webkit-text-stroke:0.4px #151515">3</div>
<div class="t" style="left:847.20px;top:782.75px;font-size:14px;line-height:14px;color:#808080;font-weight:400;letter-spacing:-0.536px">Статус заказа</div>
<div class="abs" style="left:847px;top:812.5px;width:9px;height:9px;background:#0a5ef0;border-radius:50%"></div>
<div class="t" style="left:863.40px;top:810.15px;font-size:14px;line-height:14px;color:#333;font-weight:400;-webkit-text-stroke:0.4px #333;letter-spacing:0.026px">Новый</div>
<div class="t" style="left:1063.40px;top:782.75px;font-size:14px;line-height:14px;color:#808080;font-weight:400;letter-spacing:-0.324px">Сума заказа</div>
<div class="t" style="left:1063.40px;top:810.15px;font-size:14px;line-height:14px;color:#333;font-weight:400;-webkit-text-stroke:0.4px #333;letter-spacing:0.684px">20 752 ₽</div>
<div class="abs" style="left:1294px;top:783px;width:40px;height:40px;background:#f2f3f8;border-radius:3px"></div>
<div class="abs" style="left:1349px;top:783px;width:40px;height:40px;background:#f2f3f8;border-radius:3px"></div>
<div class="abs" style="left:1404px;top:783px;width:40px;height:40px;background:#f2f3f8;border-radius:3px"></div>
<svg class="abs" style="left:1294px;top:783px;" width="40" height="40" viewBox="0 0 40 40"><path d="M11.5 19 V17.6 Q11.5 14 15.1 14 H29 M25.6 10.5 L29 14 L25.6 17.5 M28.5 21 V22.4 Q28.5 26 24.9 26 H11 M14.4 22.5 L11 26 L14.4 29.5" stroke="#0a62f5" stroke-width="2.2" fill="none" stroke-linecap="round" stroke-linejoin="round"/></svg>
<svg class="abs" style="left:1349px;top:783px;" width="40" height="40" viewBox="0 0 40 40"><path d="M13.6 13.6 L26.4 26.4 M26.4 13.6 L13.6 26.4" stroke="#0a62f5" stroke-width="2.1" stroke-linecap="round"/></svg>
<svg class="abs" style="left:1404px;top:783px;" width="40" height="40" viewBox="0 0 40 40"><path d="M14.4 17.6 L20 23 L25.6 17.6" stroke="#0a62f5" stroke-width="2.1" fill="none" stroke-linecap="round" stroke-linejoin="round"/></svg>
<svg class="abs" style="left:0;top:0;width:8px;height:8px" width="8" height="8" viewBox="0 0 8 8"><path d="M0 0 H6 L0 6 Z" fill="#476670"/></svg>
<svg class="abs" style="right:0;top:0;transform:scaleX(-1);width:8px;height:8px" width="8" height="8" viewBox="0 0 8 8"><path d="M0 0 H6 L0 6 Z" fill="#476670"/></svg>
<svg class="abs" style="left:0;bottom:0;transform:scaleY(-1);width:8px;height:8px" width="8" height="8" viewBox="0 0 8 8"><path d="M0 0 H6 L0 6 Z" fill="#476670"/></svg>
<svg class="abs" style="right:0;bottom:0;transform:scale(-1,-1);width:8px;height:8px" width="8" height="8" viewBox="0 0 8 8"><path d="M0 0 H6 L0 6 Z" fill="#476670"/></svg>
</body>
</html>
